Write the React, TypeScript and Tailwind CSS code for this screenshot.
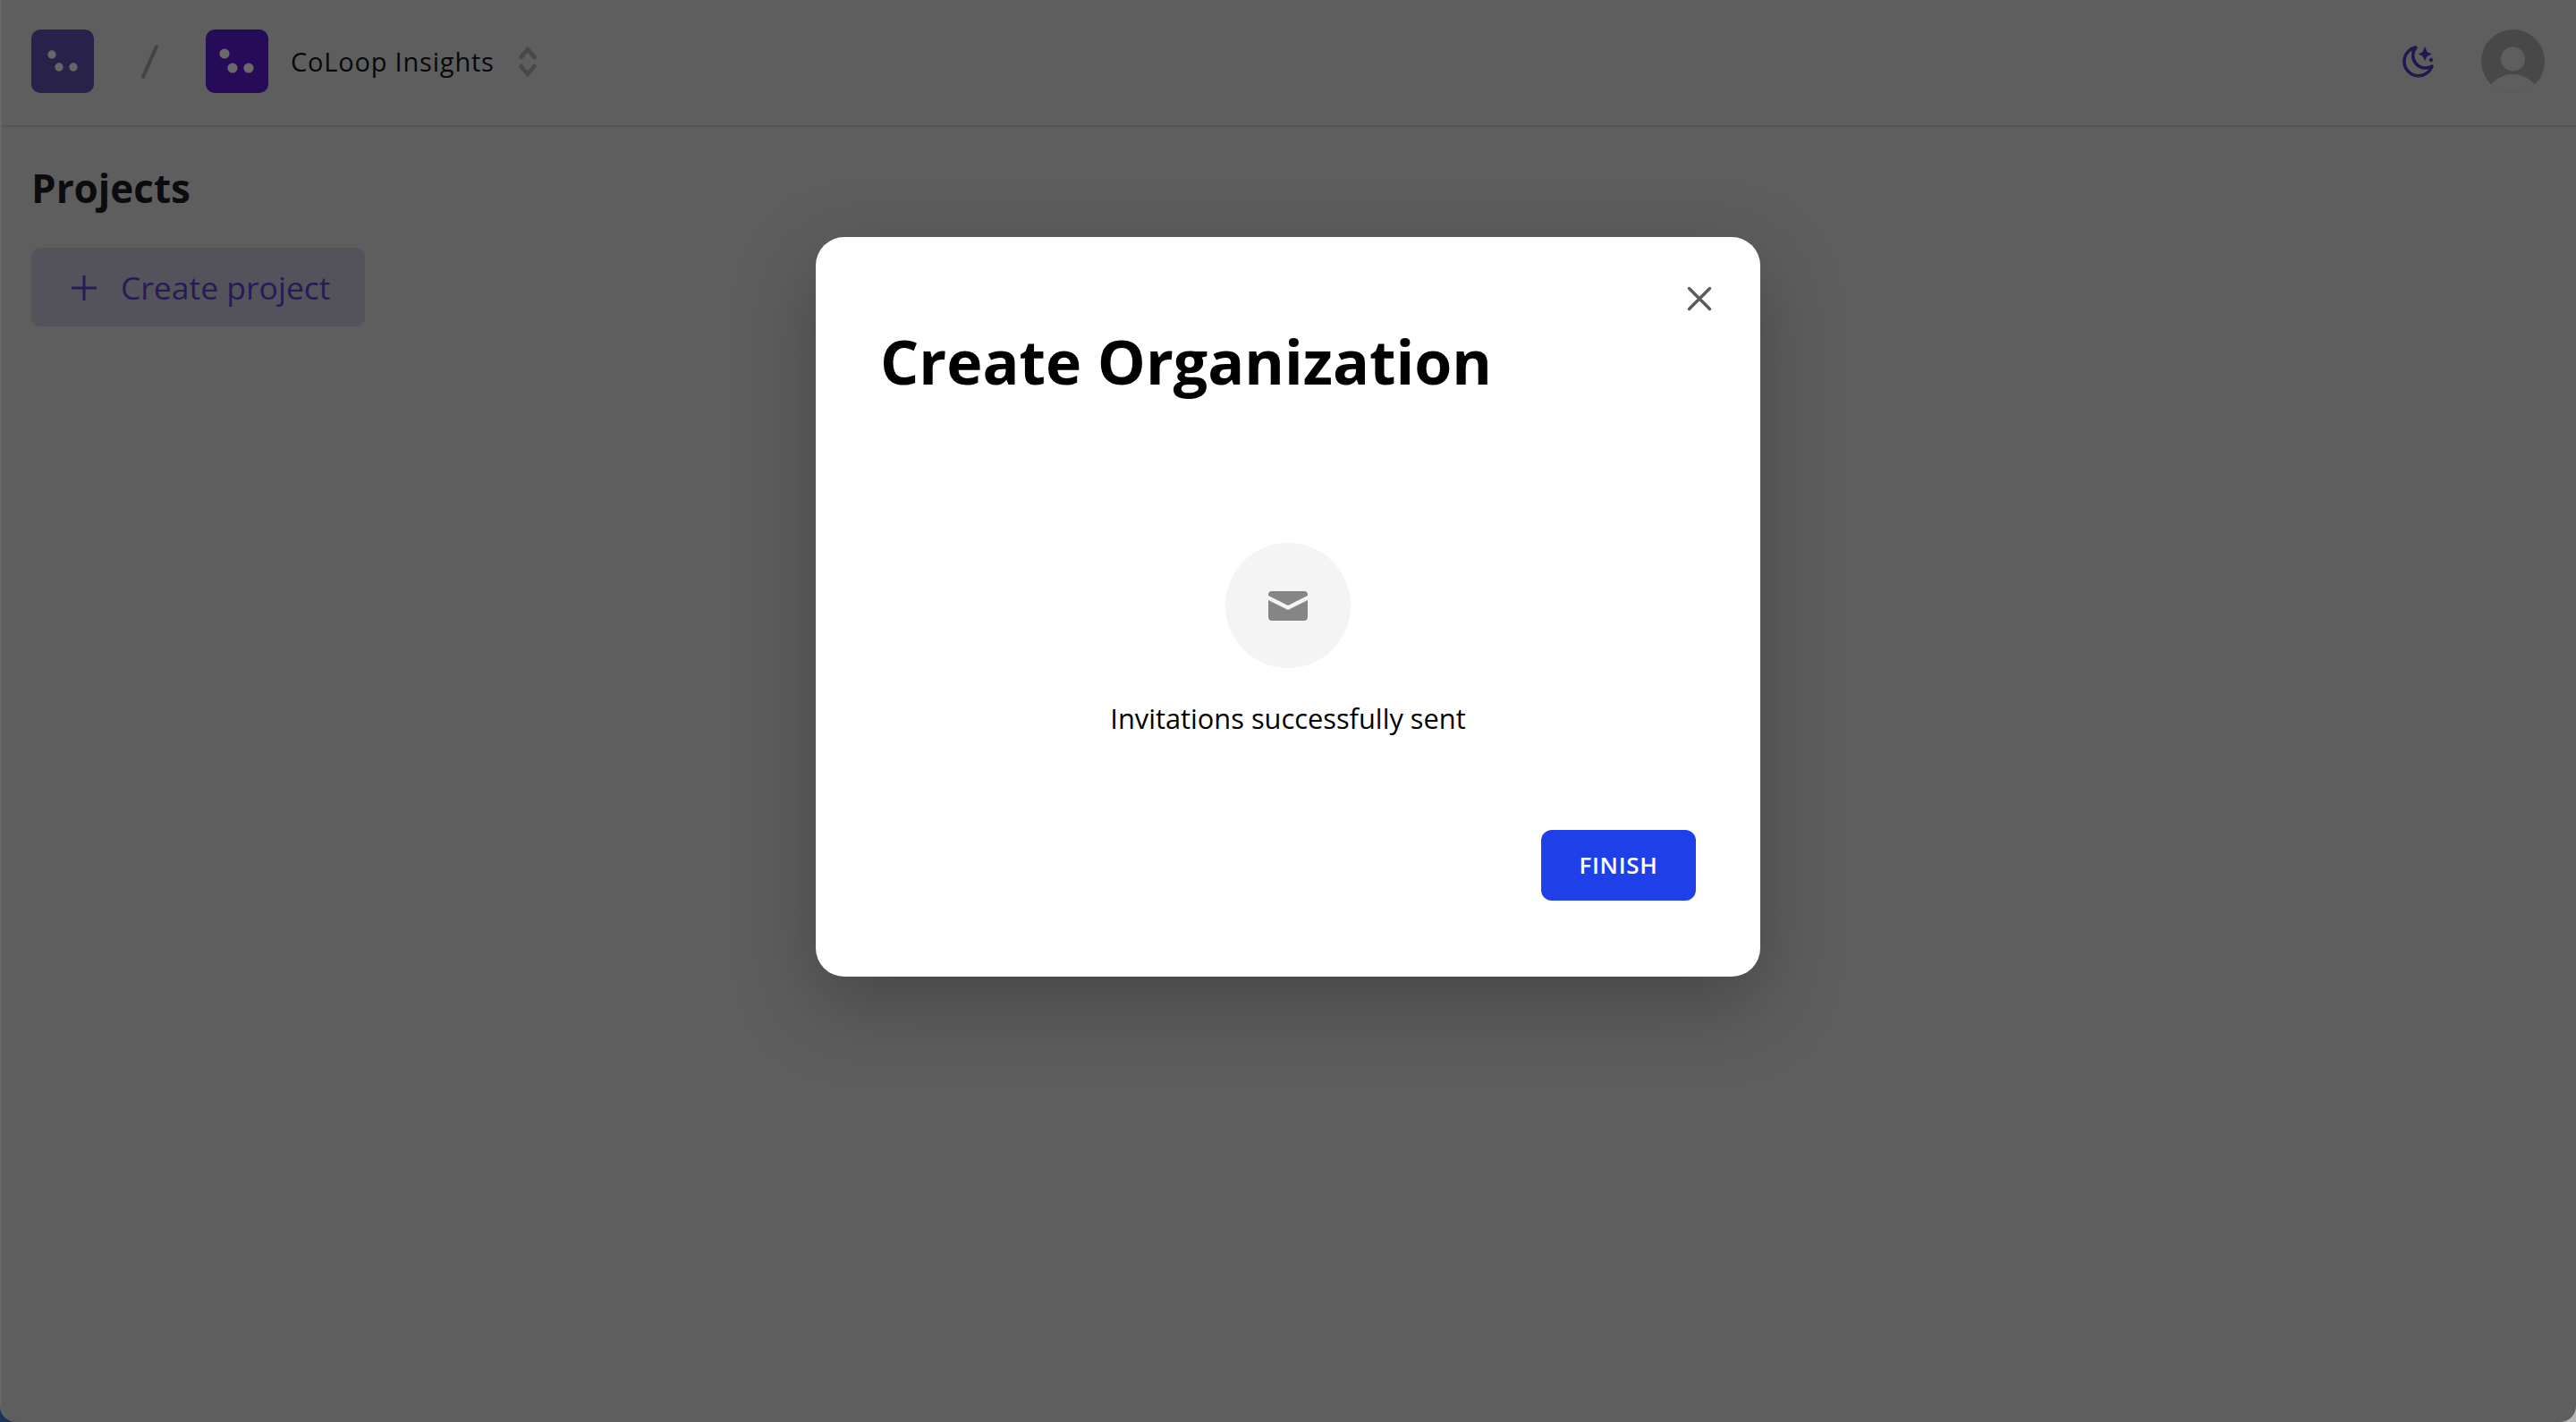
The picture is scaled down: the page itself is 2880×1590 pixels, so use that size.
const sans = 'font-["Open_Sans",sans-serif]'

function LogoMark({ tone }: { tone: 'muted' | 'vivid' }) {
  const muted = tone === 'muted'
  return (
    <div className={`w-[70px] h-[71px] rounded-[10px] ${muted ? 'bg-[#28214a]' : 'bg-[#260b59]'}`}>
      <svg viewBox="0 0 70 71" className="w-full h-full">
        {muted ? (
          <g fill="#666">
            <circle cx="23" cy="28" r="4.700" />
            <circle cx="31" cy="42" r="4.700" />
            <circle cx="47" cy="42" r="4.700" />
          </g>
        ) : (
          <g fill="#6a6a6a">
            <circle cx="21" cy="27" r="5.600" />
            <circle cx="30" cy="43" r="5.600" />
            <circle cx="48" cy="43" r="5.600" />
          </g>
        )}
      </svg>
    </div>
  )
}

function Header() {
  return (
    <header className="h-[142px] flex items-center justify-between pl-[33px] pr-[35px] pb-[3px] border-b-2 border-[#555]">
      <div className="flex items-center">
        <LogoMark tone="muted" />
        <svg viewBox="0 0 24 40" className="w-[24px] h-[40px] ml-[50px] mr-[51px]">
          <path d="M20 3 L5 37" stroke="#444" strokeWidth="4" strokeLinecap="round" />
        </svg>
        <LogoMark tone="vivid" />
        <span className="ml-[25px] text-[29px] tracking-[0.8px] text-[#08080c]">CoLoop Insights</span>
        <svg viewBox="0 0 20 36" className="w-[20px] h-[36px] ml-[27px]">
          <path d="M2.500 13 L10 4 L17.500 13 M2.500 23 L10 32 L17.500 23" fill="none" stroke="#484848" strokeWidth="4.500" strokeLinecap="round" strokeLinejoin="round" />
        </svg>
      </div>
      <div className="flex items-center gap-[52px]">
        <svg viewBox="0 0 38 38" className="w-[38px] h-[38px]" fill="none">
          <path d="M17 3 A16 16 0 1 0 35 24 A14 14 0 0 1 17 3 Z" stroke="#1f1a4d" strokeWidth="3.500" strokeLinejoin="round" />
          <path d="M27 2 L29.500 8 L35 10.500 L29.500 13 L27 18 L24.500 13 L20 10.500 L24.500 8 Z" fill="#1f1a4d" />
          <path d="M34 14 L36.500 17 L34 20 L31.500 17 Z" fill="#1f1a4d" />
        </svg>
        <div className="w-[71px] h-[71px] rounded-full bg-[#484848] overflow-hidden">
          <svg viewBox="0 0 71 71" className="w-full h-full">
            <circle cx="35.500" cy="33" r="13.500" fill="#5e5e5e" />
            <circle cx="35.500" cy="82" r="32" fill="#5e5e5e" />
          </svg>
        </div>
      </div>
    </header>
  )
}

export default function App() {
  return (
    <div className={`relative w-full h-[1590px] bg-gradient-to-r from-[#1c3358] to-[#b5b5b5] overflow-hidden ${sans}`}>
      <div className="h-full bg-[#5e5e5e] rounded-b-[18px] border-l-2 border-[#666] overflow-hidden">
        <Header />
        <main className="pl-[33px] pt-[38px]">
          <h1 className="text-[44px] leading-[60px] font-bold text-[#0b0b10]">Projects</h1>
          <button className="mt-[37px] w-[373px] h-[88px] rounded-[10px] bg-[#54535c] flex items-center pl-[44px] pt-[2px] gap-[26px] text-[35.500px] text-[#241d52]">
            <svg viewBox="0 0 30 30" className="w-[30px] h-[30px]">
              <path d="M15 1 V29 M1 15 H29" stroke="#241d52" strokeWidth="3" />
            </svg>
            Create project
          </button>
        </main>
      </div>
      <div className="absolute inset-0 flex justify-center pt-[265px]">
        <div className="relative w-[1056px] h-[827px] rounded-[32px] bg-white shadow-[0_30px_90px_rgba(0,0,0,0.26)] pl-[72px] pr-[72px] flex flex-col">
          <button className="absolute top-[48px] right-[47px] text-[#5b5b5b]">
            <svg viewBox="0 0 42 42" className="w-[42px] h-[42px]">
              <path d="M9.500 9.500 L32.500 32.500 M32.500 9.500 L9.500 32.500" stroke="currentColor" strokeWidth="3.500" strokeLinecap="round" />
            </svg>
          </button>
          <h2 className="mt-[90px] text-[68px] leading-[98px] font-bold text-black">Create Organization</h2>
          <div className="mt-[154px] self-center w-[140px] h-[140px] rounded-full bg-[#f4f4f4] flex items-center justify-center">
            <svg viewBox="0 0 44 33" className="w-[44px] h-[33px]">
              <path d="M4 0 H40 A4 4 0 0 1 44 4 V5 L22 16 L0 5 V4 A4 4 0 0 1 4 0 Z" fill="#858585" />
              <path d="M0 10 L22 21 L44 10 V29 A4 4 0 0 1 40 33 H4 A4 4 0 0 1 0 29 Z" fill="#858585" />
            </svg>
          </div>
          <p className="mt-[34px] text-center text-[30.800px] leading-[44px] text-black">Invitations successfully sent</p>
          <button className="mt-[103px] self-end w-[173px] h-[79px] rounded-[12px] bg-[#1f3fe8] text-white text-[26px] font-semibold tracking-[0.7px]">FINISH</button>
        </div>
      </div>
    </div>
  )
}
